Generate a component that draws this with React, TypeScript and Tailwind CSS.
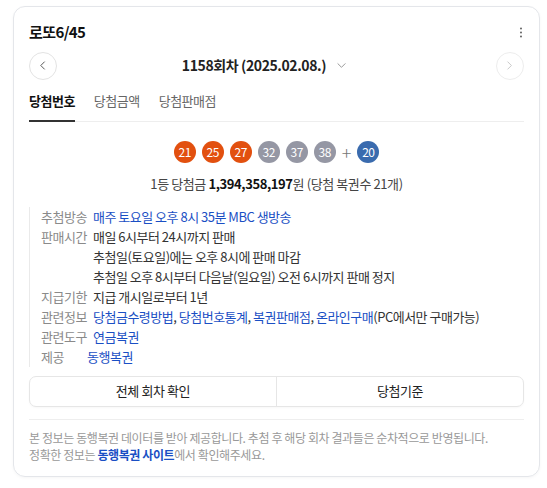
const font = {
  fontFamily: '"Noto Sans CJK KR", "Noto Sans", sans-serif',
};

type Ball = { n: number; color: string };

const balls: Ball[] = [
  { n: 21, color: "bg-[#e2500f]" },
  { n: 25, color: "bg-[#e2500f]" },
  { n: 27, color: "bg-[#e2500f]" },
  { n: 32, color: "bg-[#9597a4]" },
  { n: 37, color: "bg-[#9597a4]" },
  { n: 38, color: "bg-[#9597a4]" },
];

function LottoBall({ n, color }: Ball) {
  return (
    <span
      className={`flex h-[22px] w-[22px] items-center justify-center rounded-full text-[12px] tracking-[-0.5px] text-white ${color}`}
    >
      {n}
    </span>
  );
}

function Chevron({ dir, className }: { dir: "left" | "right" | "down"; className?: string }) {
  const d =
    dir === "left" ? "M6 1 2 5l4 4" : dir === "right" ? "M2 1l4 4-4 4" : "M1 3l4 4 4-4";
  return (
    <svg viewBox="0 0 10 10" className={className} fill="none" stroke="currentColor" strokeWidth="1.1">
      <path d={d} strokeLinecap="round" strokeLinejoin="round" />
    </svg>
  );
}

function InfoRow({ label, children, labelWidth = "w-[52px]" }: { label: string; children: React.ReactNode; labelWidth?: string }) {
  return (
    <div className="flex">
      <span className={`shrink-0 text-[#8a8a8a] ${labelWidth}`}>{label}</span>
      <div className="flex flex-col">{children}</div>
    </div>
  );
}

export default function App() {
  return (
    <div className="min-h-screen bg-white px-[13px] pt-[6px]" style={font}>
      <div className="w-[527px] rounded-[12px] border border-[#e4e6ea] px-[15px] pb-[13px] shadow-[0_1px_3px_rgba(0,0,0,0.04)]">
        {/* header */}
        <div className="flex items-center justify-between pt-[14px]">
          <h2 className="text-[15px] font-bold tracking-[-0.6px] text-[#111]">로또6/45</h2>
          <svg viewBox="0 0 4 14" className="mr-[1px] h-[11px] w-[4px] text-[#666]" fill="currentColor">
            <circle cx="2" cy="2" r="1.3" />
            <circle cx="2" cy="7" r="1.3" />
            <circle cx="2" cy="12" r="1.3" />
          </svg>
        </div>

        {/* round selector */}
        <div className="mt-[8px] flex items-center">
          <button className="flex h-[28px] w-[28px] items-center justify-center rounded-full border border-[#e3e3e3]">
            <Chevron dir="left" className="h-[9px] w-[9px] text-[#555]" />
          </button>
          <div className="flex flex-1 items-center justify-center gap-[11px] pr-[25px]">
            <span className="text-[14px] font-semibold tracking-[-0.4px] text-[#222]">1158회차 (2025.02.08.)</span>
            <Chevron dir="down" className="h-[9px] w-[9px] text-[#999]" />
          </div>
          <button className="flex h-[28px] w-[28px] items-center justify-center rounded-full border border-[#ededed]">
            <Chevron dir="right" className="h-[9px] w-[9px] text-[#c8c8c8]" />
          </button>
        </div>

        {/* tabs */}
        <div className="mt-[11px] flex gap-[19px] border-b border-[#eeeeee] text-[13px] tracking-[-0.5px]">
          <span className="-mb-px border-b-2 border-[#333] pb-[10px] font-bold text-[#111]">당첨번호</span>
          <span className="pb-[10px] text-[#666]">당첨금액</span>
          <span className="pb-[10px] text-[#666]">당첨판매점</span>
        </div>

        {/* numbers */}
        <div className="mt-[19px] flex items-center justify-center gap-[6px]">
          {balls.map((b) => (
            <LottoBall key={b.n} {...b} />
          ))}
          <span className="text-[18px] font-light leading-none text-[#777]">+</span>
          <LottoBall n={20} color="bg-[#3a6bae]" />
        </div>
        <p className="mt-[11px] text-center text-[13px] tracking-[-0.4px] text-[#444]">
          1등 당첨금 <b className="font-bold text-[#111]">1,394,358,197</b>원 (당첨 복권수 21개)
        </p>

        {/* info */}
        <div className="mt-[13px] flex flex-col border-l border-[#eaeaea] pl-[11px] text-[13px] leading-[20px] tracking-[-0.5px] text-[#333]">
          <InfoRow label="추첨방송">
            <span className="text-[#1a4fc4]">매주 토요일 오후 8시 35분 MBC 생방송</span>
          </InfoRow>
          <InfoRow label="판매시간">
            <span>매일 6시부터 24시까지 판매</span>
            <span>추첨일(토요일)에는 오후 8시에 판매 마감</span>
            <span>추첨일 오후 8시부터 다음날(일요일) 오전 6시까지 판매 정지</span>
          </InfoRow>
          <InfoRow label="지급기한">
            <span>지급 개시일로부터 1년</span>
          </InfoRow>
          <InfoRow label="관련정보">
            <span>
              <span className="text-[#1a4fc4]">당첨금수령방법</span>,{" "}
              <span className="text-[#1a4fc4]">당첨번호통계</span>,{" "}
              <span className="text-[#1a4fc4]">복권판매점</span>,{" "}
              <span className="text-[#1a4fc4]">온라인구매</span>(PC에서만 구매가능)
            </span>
          </InfoRow>
          <InfoRow label="관련도구">
            <span className="text-[#1a4fc4]">연금복권</span>
          </InfoRow>
          <InfoRow label="제공" labelWidth="w-[46px]">
            <span className="text-[#1a4fc4]">동행복권</span>
          </InfoRow>
        </div>

        {/* buttons */}
        <div className="mt-[9px] flex h-[31px] rounded-[7px] border border-[#e6e6e6] text-[13px] tracking-[-0.4px] text-[#222] shadow-[0_1px_2px_rgba(0,0,0,0.03)]">
          <button className="flex flex-1 items-center justify-center border-r border-[#e6e6e6]">전체 회차 확인</button>
          <button className="flex flex-1 items-center justify-center">당첨기준</button>
        </div>

        {/* footer */}
        <div className="mt-[12px] border-t border-[#eeeeee] pt-[9px] text-[12px] leading-[17px] tracking-[-0.4px] text-[#999]">
          <p>본 정보는 동행복권 데이터를 받아 제공합니다. 추첨 후 해당 회차 결과들은 순차적으로 반영됩니다.</p>
          <p>
            정확한 정보는 <span className="font-bold text-[#1a4fc4]">동행복권 사이트</span>에서 확인해주세요.
          </p>
        </div>
      </div>
    </div>
  );
}
